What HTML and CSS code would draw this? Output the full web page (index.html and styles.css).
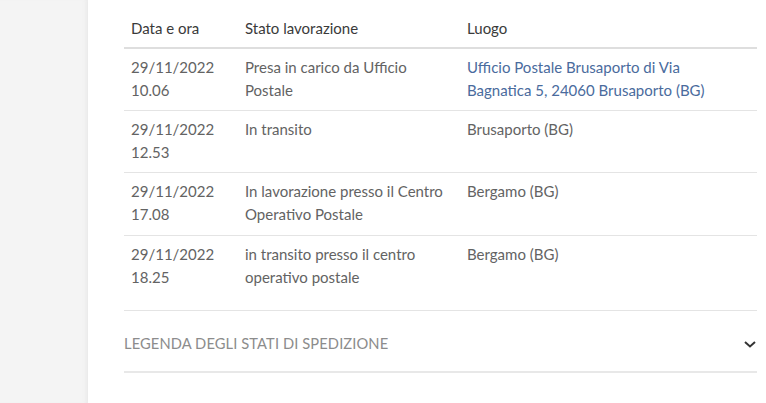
FILE: index.html
```html
<!DOCTYPE html>
<html lang="it">
<head>
<meta charset="utf-8">
<title>Tracking</title>
<link rel="stylesheet" href="styles.css">
</head>
<body>
<div class="page">
  <aside class="sidebar"></aside>
  <main class="main">
    <table class="track">
      <thead>
        <tr>
          <th class="c1">Data e ora</th>
          <th class="c2">Stato lavorazione</th>
          <th class="c3">Luogo</th>
        </tr>
      </thead>
      <tbody>
        <tr>
          <td>29/11/2022<br>10.06</td>
          <td>Presa in carico da Ufficio<br>Postale</td>
          <td><a class="link" href="#">Ufficio Postale Brusaporto di Via<br>Bagnatica 5, 24060 Brusaporto (BG)</a></td>
        </tr>
        <tr>
          <td>29/11/2022<br>12.53</td>
          <td>In transito</td>
          <td>Brusaporto (BG)</td>
        </tr>
        <tr>
          <td>29/11/2022<br>17.08</td>
          <td>In lavorazione presso il Centro<br>Operativo Postale</td>
          <td>Bergamo (BG)</td>
        </tr>
        <tr class="last">
          <td>29/11/2022<br>18.25</td>
          <td>in transito presso il centro<br>operativo postale</td>
          <td>Bergamo (BG)</td>
        </tr>
      </tbody>
    </table>
    <div class="legend">
      <span class="legend-title">LEGENDA DEGLI STATI DI SPEDIZIONE</span>
      <svg class="chev" width="14" height="10" viewBox="0 0 14 10"><path d="M2 3 L7 7.5 L12 3" fill="none" stroke="#333" stroke-width="2"/></svg>
    </div>
  </main>
</div>
</body>
</html>
```
FILE: styles.css
```css
* { box-sizing: border-box; }
html, body { margin: 0; padding: 0; background: #fff; }
body { font-family: Lato, "Open Sans", sans-serif; font-size: 15px; color: #636363; }
.page { display: flex; min-height: 403px; }
.sidebar { width: 88px; flex: none; background: #f4f4f4; box-shadow: inset -5px 0 4px -3px #e9e9e9; }
.main { flex: none; width: 633px; margin-left: 36px; padding-top: 12px; }
.track { width: 633px; border-collapse: collapse; table-layout: fixed; }
.track th { text-align: left; font-weight: 400; color: #3a3a3a; padding: 5px 7px 7px; line-height: 23px; border-bottom: 2px solid #dedede; }
.track .c1 { width: 114px; }
.track .c2 { width: 222px; }
.track td { vertical-align: top; padding: 7px 7px 8px; line-height: 23px; border-bottom: 1px solid #e4e4e4; }
.track tr:nth-child(3) td { padding-bottom: 9px; }
.track tr.last td { border-bottom: none; padding-bottom: 21px; }
.link { color: #4a6b9d; text-decoration: none; }
.legend { display: flex; align-items: center; justify-content: space-between; height: 63px; padding-top: 4px; border-top: 1px solid #e4e4e4; border-bottom: 2px solid #e8e8e8; }
.legend-title { color: #8c8c8c; font-size: 14.7px; letter-spacing: 0.1px; }
.chev { margin-top: 2px; }
```
